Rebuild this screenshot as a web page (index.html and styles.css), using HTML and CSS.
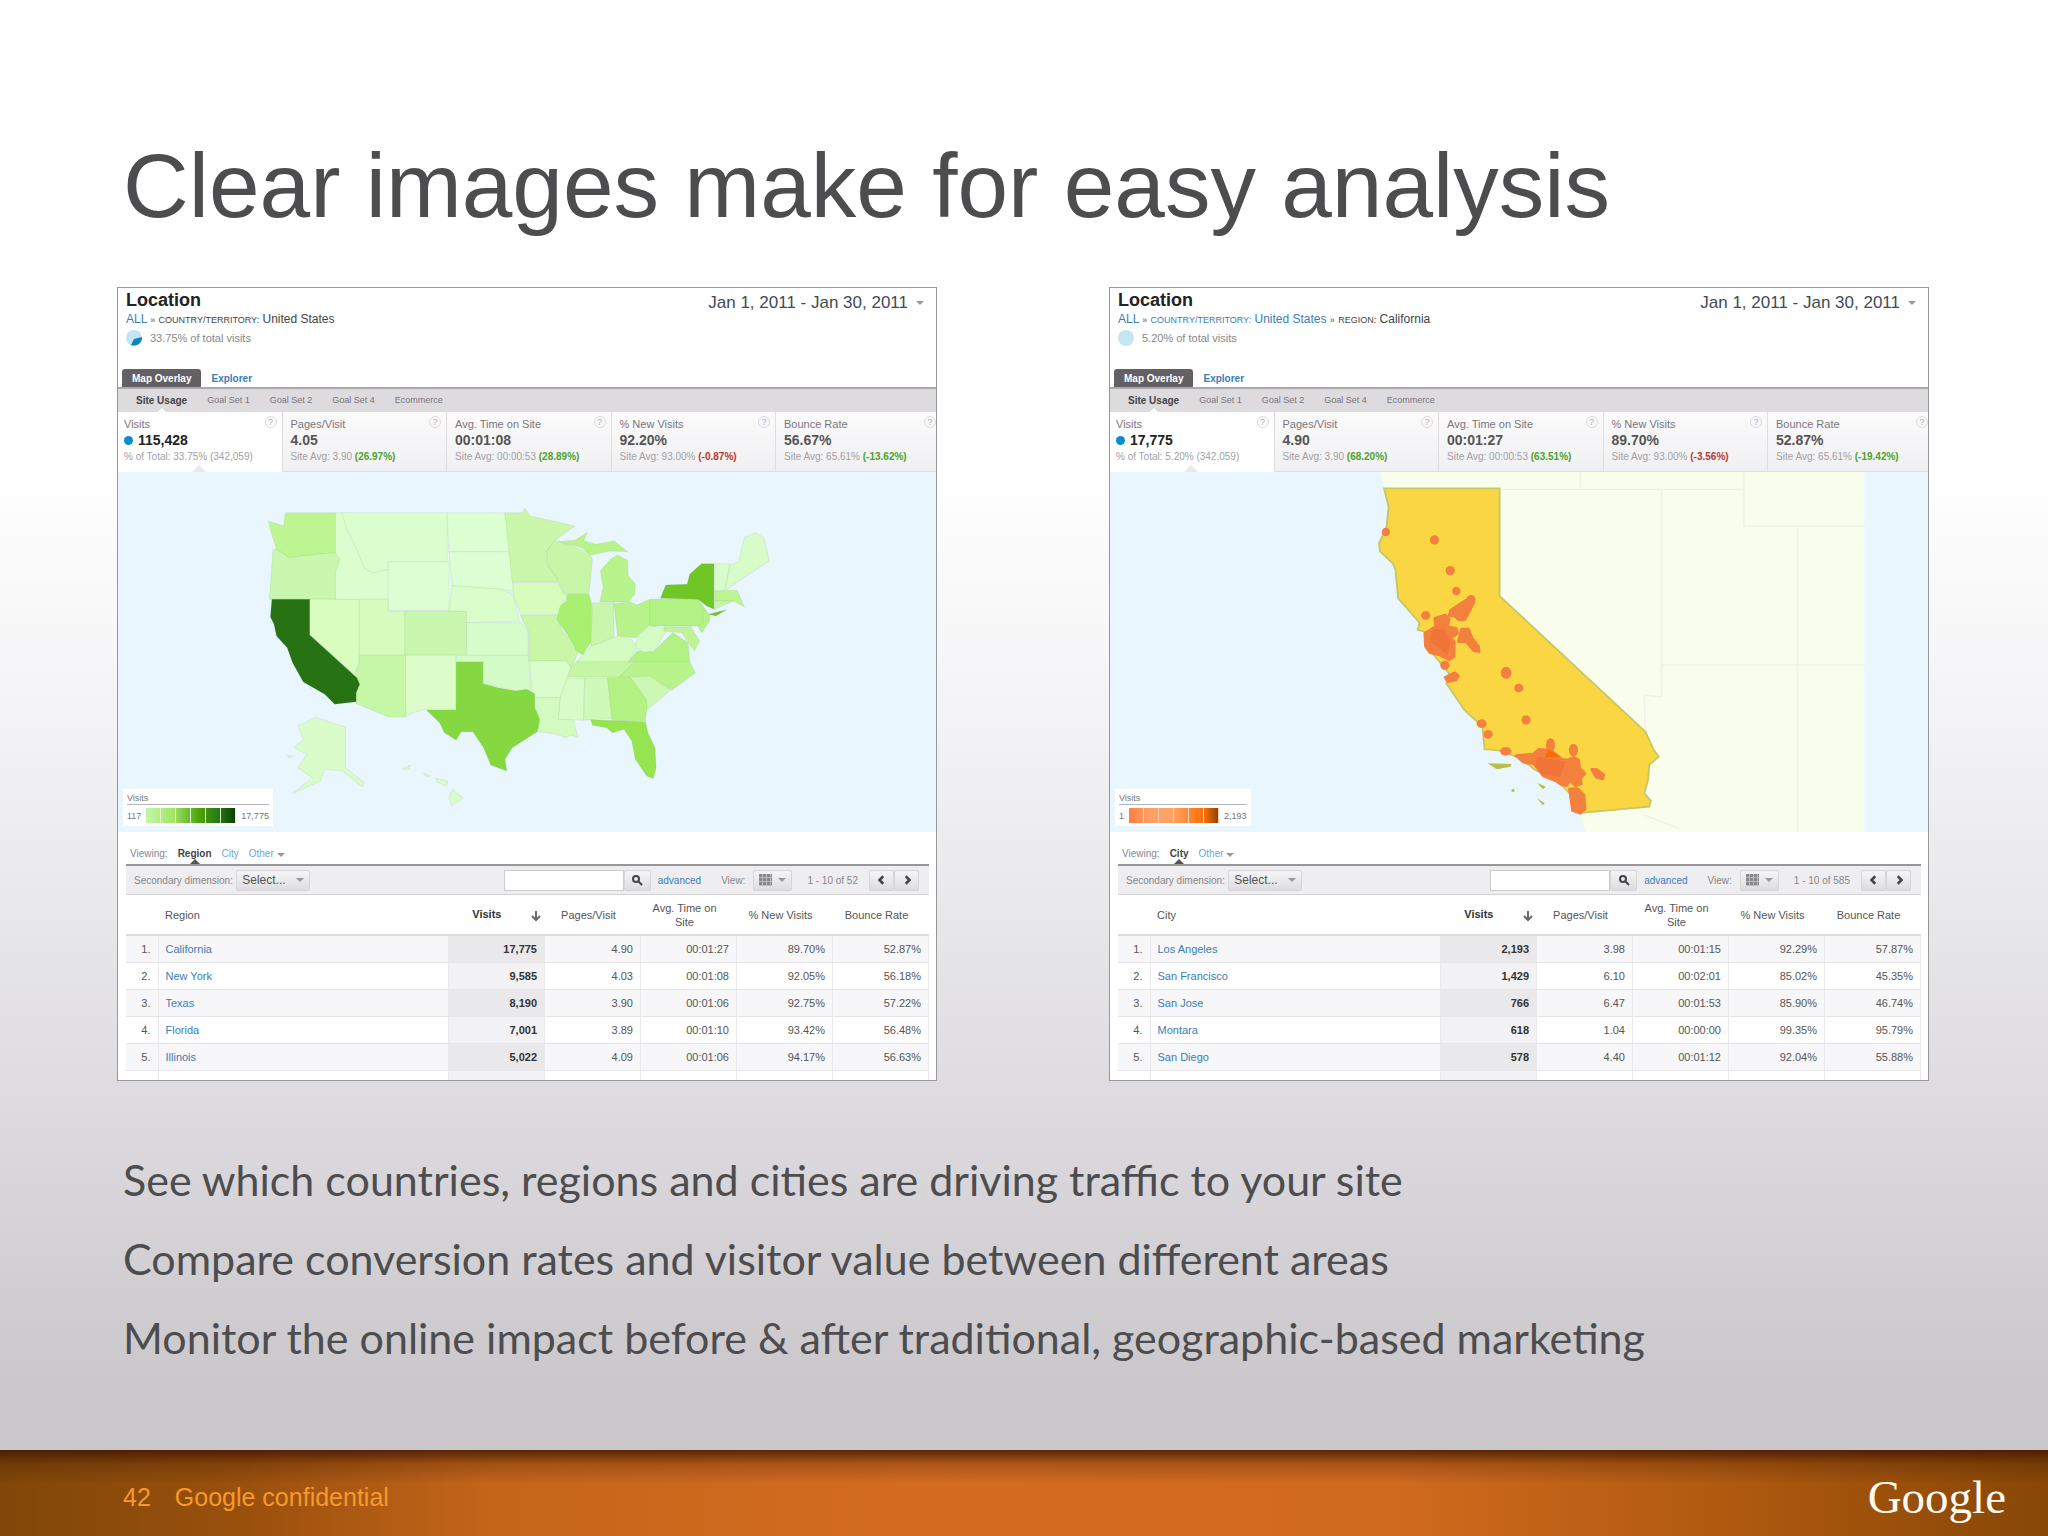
FILE: index.html
```html
<!DOCTYPE html>
<html lang="en">
<head>
  <meta charset="UTF-8">
  <meta name="viewport" content="width=device-width, initial-scale=1.0">
  <title>Clear images make for easy analysis</title>
  <link rel="stylesheet" href="styles.css">
</head>
<body>
  <main class="slide">
    <h1>Clear images make for easy analysis</h1>

    <div class="reports">
      <section class="report">
        <header class="report-header">
          <div>
            <h2>Location</h2>
            <div class="crumbs"><a href="#">ALL</a> <b>»</b> <small>COUNTRY/TERRITORY:</small> United States</div>
            <div class="share">
              <svg class="pie" viewBox="0 0 16 16"><circle cx="8" cy="8" r="8" fill="#c3e6f4"/><path d="M8 9L16 7A8 8 0 0 1 5 15z" fill="#0d84c0"/></svg>
              33.75% of total visits
            </div>
          </div>
          <button class="date-range">Jan 1, 2011 - Jan 30, 2011 <span class="caret"></span></button>
        </header>
        <nav class="tabs">
          <a class="active" href="#">Map Overlay</a>
          <a href="#">Explorer</a>
        </nav>
        <nav class="subtabs">
          <a class="active" href="#">Site Usage</a>
          <a href="#">Goal Set 1</a>
          <a href="#">Goal Set 2</a>
          <a href="#">Goal Set 4</a>
          <a href="#">Ecommerce</a>
        </nav>
        <div class="metrics">
          <div class="metric selected"><span class="label">Visits</span><i class="help">?</i><strong><span class="dot"></span>115,428</strong><span class="note">% of Total: 33.75% (342,059)</span></div>
          <div class="metric"><span class="label">Pages/Visit</span><i class="help">?</i><strong>4.05</strong><span class="note">Site Avg: 3.90 <b class="good">(26.97%)</b></span></div>
          <div class="metric"><span class="label">Avg. Time on Site</span><i class="help">?</i><strong>00:01:08</strong><span class="note">Site Avg: 00:00:53 <b class="good">(28.89%)</b></span></div>
          <div class="metric"><span class="label">% New Visits</span><i class="help">?</i><strong>92.20%</strong><span class="note">Site Avg: 93.00% <b class="bad">(-0.87%)</b></span></div>
          <div class="metric"><span class="label">Bounce Rate</span><i class="help">?</i><strong>56.67%</strong><span class="note">Site Avg: 65.61% <b class="good">(-13.62%)</b></span></div>
        </div>
        <div class="map">
          <svg viewBox="0 0 818 360">
            <g class="states" transform="translate(121 9) scale(.3571 .3333)">
              <path fill="#bdf590" d="M82 120L125 135 130 95H270V215L200 222 140 230 105 205 92 160z"/>
              <path fill="#caf7b0" d="M95 205L105 205 140 230 200 222 270 215 282 235 272 275V355H85L90 280z"/>
              <path fill="#dafdc0" d="M198 355H337V545L322 580 198 462z"/>
              <path fill="#dcfdce" d="M270 95H292L300 140 345 215 350 260 372 275 418 262V355H270V275L282 235 270 215z"/>
              <path fill="#dbfecf" d="M288 95H583V242H418V265L372 275 350 260 330 205 300 140z"/>
              <path fill="#ddffd4" d="M418 242H588V388H418z"/>
              <path fill="#d5fbbd" d="M337 355H418V390H465V523H337z"/>
              <path fill="#c9f7b0" d="M465 390H637V523H465z"/>
              <path fill="#c6f7a6" d="M337 523H467V708H420L328 668V635L338 610 325 580 337 545z"/>
              <path fill="#dcfdca" d="M467 523H608V685H525L485 695 467 708z"/>
              <path fill="#dcffd3" d="M583 95H745L762 212H588z"/>
              <path fill="#dcffd3" d="M588 212H762L768 332 735 325 597 314z"/>
              <path fill="#d9fecb" d="M597 314L735 325 768 340 785 420 637 425V390H588z"/>
              <path fill="#d6fcc9" d="M637 425H792L810 455V523H637z"/>
              <path fill="#d3fbc6" d="M608 523H810L818 630H780L685 608V543H608z"/>
              <path fill="#cbf7ad" d="M745 95H795L800 82 815 105 870 118 940 135 885 178 862 210V250L890 290 893 303H765z"/>
              <path fill="#d7fcbc" d="M768 305H893L918 350 895 400H788L768 340z"/>
              <path fill="#c9f6a7" d="M788 403H890L905 450 940 490 948 520 930 560 915 540H812V455z"/>
              <path fill="#dafdcd" d="M815 540H918L930 560 900 650H822z"/>
              <path fill="#d3fbc1" d="M822 650H900L895 715H935L950 770 930 762 915 770 890 760 835 752 842 715 828 680z"/>
              <path fill="#c8f6a9" d="M885 178L920 190 978 215 990 235 980 338H910L890 290 865 255 862 210z"/>
              <path fill="#a9f070" d="M918 340H980L987 365V480L962 522 945 510 935 485 890 415 900 375 918 360z"/>
              <path fill="#b9f38c" d="M895 182L940 178 975 155 965 180 1000 190 1050 180 1088 212 1040 210 985 222 960 200z"/>
              <path fill="#b9f38c" d="M1040 235L1060 222 1088 238 1090 285 1110 310 1108 340 1090 363H1010L1020 320 1012 270z"/>
              <path fill="#c7f6ac" d="M990 365H1050V470L985 497z"/>
              <path fill="#b7f28a" d="M1050 368L1095 363 1115 372 1150 355V430L1110 470 1060 465z"/>
              <path fill="#d4fbc0" d="M962 522L985 497 1060 465 1100 475 1115 500 1090 540 945 542z"/>
              <path fill="#c6f6a5" d="M930 560L945 542H1110L1065 588H920z"/>
              <path fill="#d8fcc7" d="M918 592H968L965 718 895 715 900 650z"/>
              <path fill="#cef9b7" d="M968 592H1032L1045 712 965 718z"/>
              <path fill="#b4f284" d="M1032 590L1095 588 1145 655 1138 720 1045 718z"/>
              <path fill="#ccf8b5" d="M1095 588L1150 582 1208 628 1145 685 1140 655z"/>
              <path fill="#b9f38c" d="M1110 542H1262L1278 575 1212 628 1150 585 1065 588z"/>
              <path fill="#b2f183" d="M1090 542L1115 510 1160 512 1215 455 1258 485 1262 542z"/>
              <path fill="#d6fcc5" d="M1110 500L1115 470 1150 432 1200 445 1165 505 1135 515z"/>
              <path fill="#b2f183" d="M1150 355H1285L1310 392 1300 435H1150z"/>
              <path fill="#b5f288" d="M1298 385L1318 400V420L1295 455 1285 435 1300 425z"/>
              <path fill="#c0f498" d="M1190 437H1265L1290 480 1275 510 1240 455 1190 450z"/>
              <path fill="#6fc624" d="M1180 352L1195 312 1255 310 1262 280 1295 248H1330V385L1310 375 1285 355z"/>
              <path fill="#6fc624" d="M1315 400L1365 386 1335 405z"/>
              <path fill="#d9fccb" d="M1332 248H1375L1360 330H1332z"/>
              <path fill="#d8fcc7" d="M1375 255L1400 240 1415 170 1445 155 1470 170 1485 240 1420 285 1360 330z"/>
              <path fill="#bdf494" d="M1332 330L1395 328 1415 378 1385 360H1332z"/>
              <path fill="#c7f6aa" d="M1332 360H1385L1332 385z"/>
              <path fill="#277314" d="M92 355H198V462L330 590 338 610 328 635V662L268 670 240 640 180 603 150 545 135 500 105 465 98 430 88 408z"/>
              <path fill="#86d840" d="M608 543H683V608L725 620 775 630 805 625 828 638V680L842 715 835 752 765 800 745 835 750 870 705 852 685 800 655 752H622L608 777 575 755 562 725 525 687H608z"/>
              <path fill="#96e450" d="M985 716L1138 722 1145 755 1165 800 1168 860 1160 893 1142 885 1110 835 1100 780 1078 745 1045 755 1030 740 990 733z"/>
              <path fill="#dafcc8" d="M165 735L215 710 298 738V860L350 905 345 918 290 870 240 865 228 900 150 938 205 890 165 860 190 820 155 800 180 775z"/>
              <path fill="#dafcc8" d="M455 865L480 852 475 864zM515 875L535 885 525 888zM550 892L585 900 580 915 555 903zM597 925L628 952 595 975 588 950zM135 822L150 826 140 830zM195 618L205 624zM232 645L240 658z"/>
            </g>
          </svg>
          <div class="legend">
            <p>Visits</p>
            <div class="scale"><span>117</span><i class="ramp green"></i><span>17,775</span></div>
          </div>
        </div>
        <div class="viewing">
          <span>Viewing:</span> <a class="active" href="#">Region</a> <a href="#">City</a> <a href="#">Other <span class="caret"></span></a>
        </div>
        <div class="toolbar">
          <span class="dimension">Secondary dimension:</span>
          <button class="select">Select... <span class="caret"></span></button>
          <div class="search">
            <input type="text" aria-label="Search regions">
            <button aria-label="Search"><svg viewBox="0 0 12 12"><circle cx="5" cy="5" r="3" /><path d="M7 7l4 4"/></svg></button>
          </div>
          <a href="#">advanced</a>
          <span class="view">View:</span>
          <button class="grid-button" aria-label="Table view"><span class="grid-icon"></span><span class="caret"></span></button>
          <span class="range">1 - 10 of 52</span>
          <div class="pager"><button aria-label="Previous"><svg viewBox="0 0 8 8"><path d="M5 1L2 4l3 3"/></svg></button><button aria-label="Next"><svg viewBox="0 0 8 8"><path d="M3 1l3 3-3 3"/></svg></button></div>
        </div>
        <table>
          <thead>
            <tr><th class="num"></th><th class="name">Region</th><th class="visits">Visits <svg viewBox="0 0 10 12"><path d="M5 1v9M1 6l4 4 4-4"/></svg></th><th>Pages/Visit</th><th>Avg. Time on Site</th><th>% New Visits</th><th>Bounce Rate</th></tr>
          </thead>
          <tbody>
            <tr><td>1.</td><td><a href="#">California</a></td><td>17,775</td><td>4.90</td><td>00:01:27</td><td>89.70%</td><td>52.87%</td></tr>
            <tr><td>2.</td><td><a href="#">New York</a></td><td>9,585</td><td>4.03</td><td>00:01:08</td><td>92.05%</td><td>56.18%</td></tr>
            <tr><td>3.</td><td><a href="#">Texas</a></td><td>8,190</td><td>3.90</td><td>00:01:06</td><td>92.75%</td><td>57.22%</td></tr>
            <tr><td>4.</td><td><a href="#">Florida</a></td><td>7,001</td><td>3.89</td><td>00:01:10</td><td>93.42%</td><td>56.48%</td></tr>
            <tr><td>5.</td><td><a href="#">Illinois</a></td><td>5,022</td><td>4.09</td><td>00:01:06</td><td>94.17%</td><td>56.63%</td></tr>
            <tr><td>6.</td><td><a href="#">Pennsylvania</a></td><td>4,571</td><td>3.88</td><td>00:00:54</td><td>94.20%</td><td>57.14%</td></tr>
          </tbody>
        </table>
      </section>

      <section class="report">
        <header class="report-header">
          <div>
            <h2>Location</h2>
            <div class="crumbs"><a href="#">ALL</a> <b>»</b> <a href="#"><small>COUNTRY/TERRITORY:</small> United States</a> <b>»</b> <small>REGION:</small> California</div>
            <div class="share">
              <svg class="pie" viewBox="0 0 16 16"><circle cx="8" cy="8" r="8" fill="#c3e6f0"/></svg>
              5.20% of total visits
            </div>
          </div>
          <button class="date-range">Jan 1, 2011 - Jan 30, 2011 <span class="caret"></span></button>
        </header>
        <nav class="tabs">
          <a class="active" href="#">Map Overlay</a>
          <a href="#">Explorer</a>
        </nav>
        <nav class="subtabs">
          <a class="active" href="#">Site Usage</a>
          <a href="#">Goal Set 1</a>
          <a href="#">Goal Set 2</a>
          <a href="#">Goal Set 4</a>
          <a href="#">Ecommerce</a>
        </nav>
        <div class="metrics">
          <div class="metric selected"><span class="label">Visits</span><i class="help">?</i><strong><span class="dot"></span>17,775</strong><span class="note">% of Total: 5.20% (342,059)</span></div>
          <div class="metric"><span class="label">Pages/Visit</span><i class="help">?</i><strong>4.90</strong><span class="note">Site Avg: 3.90 <b class="good">(68.20%)</b></span></div>
          <div class="metric"><span class="label">Avg. Time on Site</span><i class="help">?</i><strong>00:01:27</strong><span class="note">Site Avg: 00:00:53 <b class="good">(63.51%)</b></span></div>
          <div class="metric"><span class="label">% New Visits</span><i class="help">?</i><strong>89.70%</strong><span class="note">Site Avg: 93.00% <b class="bad">(-3.56%)</b></span></div>
          <div class="metric"><span class="label">Bounce Rate</span><i class="help">?</i><strong>52.87%</strong><span class="note">Site Avg: 65.61% <b class="good">(-19.42%)</b></span></div>
        </div>
        <div class="map">
          <svg viewBox="0 0 818 360">
            <g transform="translate(230 -12) scale(.3827 .3333)">
              <path fill="#f9fdec" d="M105 30H1370V1130H645L628 1060 417 408 115 85z"/>
              <path fill="none" stroke="#eef2e2" stroke-width="4" d="M1055 30V198H1370M417 88H1055M628 38V85M840 88V710L795 705 798 815M840 615H1370M1195 198V1130M795 1065L890 1108"/>
              <path fill="#fad742" stroke="#c6c766" stroke-width="5" d="M115 85H417V408L798 815 820 870 833 890 808 915 805 960 795 1000 812 1022 808 1040 638 1058 600 1000 560 955 510 930 470 895 420 872 378 868 372 800 325 750 278 670 285 640 245 585 222 515 203 510 208 488 152 415 145 330 138 310 105 275 102 250 122 200 127 140z"/>
              <path fill="#b9bf45" d="M385 910L448 912 445 920 410 928zM515 968L538 980 530 988zM515 1015L535 1030 530 1036zM448 988h8v7h-8z"/>
              <g fill="#f4803f">
                <ellipse cx="120" cy="216" rx="11" ry="13"/><ellipse cx="247" cy="240" rx="12" ry="14"/><ellipse cx="288" cy="332" rx="12" ry="14"/><ellipse cx="304" cy="393" rx="11" ry="13"/>
                <ellipse cx="224" cy="466" rx="12" ry="13"/><ellipse cx="342" cy="418" rx="12" ry="13"/><ellipse cx="467" cy="684" rx="12" ry="13"/><ellipse cx="486" cy="780" rx="12" ry="14"/>
                <ellipse cx="434" cy="638" rx="14" ry="18"/><ellipse cx="370" cy="791" rx="13" ry="13"/><ellipse cx="387" cy="823" rx="12" ry="13"/><ellipse cx="433" cy="874" rx="15" ry="13"/>
                <ellipse cx="550" cy="855" rx="12" ry="20"/><ellipse cx="610" cy="870" rx="12" ry="19"/><ellipse cx="274" cy="616" rx="12" ry="14"/>
                <path stroke="#f4803f" stroke-width="8" stroke-linejoin="round" d="M330 420L350 425 335 460 325 480H310L300 468H285L290 450zM248 475L275 465 285 478 280 500 303 505 307 520 290 535 298 545V590L285 600 260 585 235 578 224 560 222 520 250 500zM318 507H335L345 535 362 560 363 575 350 572 330 545H310zM275 652L300 638 309 648 303 660 282 665zM460 887L505 882 520 868 550 870 580 898 595 900 610 892 623 900 626 925 640 940 628 955 630 972 615 977 600 960 592 977 577 973 565 963 532 948 508 912 480 907zM658 928L670 928 689 945 686 957 670 952zM600 987L620 985 637 1005 640 1048 628 1060 608 1052z"/>
              </g>
              <path fill="#ef7136" fill-opacity=".8" d="M240 510L270 505 290 545 280 585 255 560 235 545zM515 890L590 905 575 950 530 945 510 920z"/>
              <path fill="#fb6b00" d="M545 868L575 890 535 892z"/>
            </g>
          </svg>
          <div class="legend">
            <p>Visits</p>
            <div class="scale"><span>1</span><i class="ramp orange"></i><span>2,193</span></div>
          </div>
        </div>
        <div class="viewing">
          <span>Viewing:</span> <a class="active" href="#">City</a> <a href="#">Other <span class="caret"></span></a>
        </div>
        <div class="toolbar">
          <span class="dimension">Secondary dimension:</span>
          <button class="select">Select... <span class="caret"></span></button>
          <div class="search">
            <input type="text" aria-label="Search cities">
            <button aria-label="Search"><svg viewBox="0 0 12 12"><circle cx="5" cy="5" r="3" /><path d="M7 7l4 4"/></svg></button>
          </div>
          <a href="#">advanced</a>
          <span class="view">View:</span>
          <button class="grid-button" aria-label="Table view"><span class="grid-icon"></span><span class="caret"></span></button>
          <span class="range">1 - 10 of 585</span>
          <div class="pager"><button aria-label="Previous"><svg viewBox="0 0 8 8"><path d="M5 1L2 4l3 3"/></svg></button><button aria-label="Next"><svg viewBox="0 0 8 8"><path d="M3 1l3 3-3 3"/></svg></button></div>
        </div>
        <table>
          <thead>
            <tr><th class="num"></th><th class="name">City</th><th class="visits">Visits <svg viewBox="0 0 10 12"><path d="M5 1v9M1 6l4 4 4-4"/></svg></th><th>Pages/Visit</th><th>Avg. Time on Site</th><th>% New Visits</th><th>Bounce Rate</th></tr>
          </thead>
          <tbody>
            <tr><td>1.</td><td><a href="#">Los Angeles</a></td><td>2,193</td><td>3.98</td><td>00:01:15</td><td>92.29%</td><td>57.87%</td></tr>
            <tr><td>2.</td><td><a href="#">San Francisco</a></td><td>1,429</td><td>6.10</td><td>00:02:01</td><td>85.02%</td><td>45.35%</td></tr>
            <tr><td>3.</td><td><a href="#">San Jose</a></td><td>766</td><td>6.47</td><td>00:01:53</td><td>85.90%</td><td>46.74%</td></tr>
            <tr><td>4.</td><td><a href="#">Montara</a></td><td>618</td><td>1.04</td><td>00:00:00</td><td>99.35%</td><td>95.79%</td></tr>
            <tr><td>5.</td><td><a href="#">San Diego</a></td><td>578</td><td>4.40</td><td>00:01:12</td><td>92.04%</td><td>55.88%</td></tr>
            <tr><td>6.</td><td><a href="#">Sacramento</a></td><td>454</td><td>4.57</td><td>00:01:07</td><td>91.70%</td><td>60.87%</td></tr>
          </tbody>
        </table>
      </section>
    </div>

    <div class="points">
      <p>See which countries, regions and cities are driving traffic to your site</p>
      <p>Compare conversion rates and visitor value between different areas</p>
      <p>Monitor the online impact before &amp; after traditional, geographic-based marketing</p>
    </div>
  </main>

  <footer class="footer">
    <span class="page-number">42</span>
    <span>Google confidential</span>
    <span class="logo">Google</span>
  </footer>
</body>
</html>
```
FILE: styles.css
```css
* {
  box-sizing: border-box;
}
body {
  margin: 0;
  min-height: 100vh;
  display: flex;
  flex-direction: column;
  font-family: "Liberation Sans", Arial, sans-serif;
  color: #4d4d4f;
  background: linear-gradient(#fff 0%, #fff 30%, #f4f4f6 46%, #dedce0 71%, #cac8cb 90%, #cac8cb 100%);
}
a {
  color: #3a7cb4;
  text-decoration: none;
}
button {
  font-family: inherit;
  padding: 0;
  cursor: pointer;
}
.slide {
  padding: 133px 119px 0 117px;
}
h1 {
  margin: 0 0 49px 6px;
  font-size: 91px;
  line-height: 105px;
  font-weight: normal;
}
.reports {
  display: grid;
  grid-template-columns: 1fr 1fr;
  gap: 172px;
}
.report {
  min-width: 0;
  max-height: 794px;
  overflow: hidden;
  border: 1px solid #98989c;
  background: #fff;
  font-size: 11px;
}
.caret {
  display: inline-block;
  border: 4px solid transparent;
  border-top-color: #999;
  border-bottom: 0;
}

/* header */
.report-header {
  display: flex;
  justify-content: space-between;
  align-items: flex-start;
  height: 81px;
  padding: 2px 12px 0 8px;
}
h2 {
  margin: 0;
  font-size: 18px;
  line-height: 20px;
  color: #222;
}
.crumbs {
  font-size: 12px;
  line-height: 18px;
  color: #444;
}
.crumbs small {
  font-size: 9px;
}
.crumbs b {
  font-size: 9px;
  color: #888;
}
.share {
  display: flex;
  align-items: center;
  gap: 8px;
  line-height: 18px;
  color: #888;
}
.pie {
  width: 16px;
  height: 16px;
}
.date-range {
  display: flex;
  align-items: center;
  gap: 8px;
  border: 0;
  background: none;
  font-size: 17px;
  line-height: 26px;
  color: #3f4a58;
}

/* tabs */
.tabs {
  display: flex;
  height: 20px;
  padding-left: 4px;
  border-bottom: 2px solid #aaa8ab;
  font-size: 10px;
  font-weight: bold;
  line-height: 19px;
}
.tabs a {
  padding: 0 10px;
}
.tabs .active {
  background: #626064;
  color: #fff;
  border-radius: 3px 3px 0 0;
}
.subtabs {
  display: flex;
  gap: 20px;
  height: 23px;
  padding-left: 18px;
  background: #dddbde;
  font-size: 9px;
  line-height: 23px;
}
.subtabs a {
  color: #77757a;
}
.subtabs .active {
  position: relative;
  font-size: 10px;
  font-weight: bold;
  color: #444;
}
.subtabs .active::after {
  content: "";
  position: absolute;
  left: 50%;
  bottom: 0;
  margin-left: -4px;
  border: 4px solid transparent;
  border-top: 0;
  border-bottom-color: #fff;
}

/* metrics */
.metrics {
  display: grid;
  grid-template-columns: repeat(4, 1fr) 160px;
  height: 60px;
}
.metric {
  display: grid;
  grid-template-columns: 1fr auto;
  align-content: start;
  padding: 4px 5px 0 8px;
  border-right: 1px solid #dfdde0;
  border-bottom: 1px solid #dfdde0;
  background: linear-gradient(#fcfbfc, #f0eff1);
  line-height: 16px;
  color: #77757a;
}
.metric.selected {
  position: relative;
  background: #fff;
  border-bottom-color: #fff;
  padding-left: 6px;
}
.metric.selected::after {
  content: "";
  position: absolute;
  left: 50%;
  bottom: -1px;
  margin-left: -8px;
  border: 7px solid transparent;
  border-top: 0;
  border-bottom-color: #e6eaee;
}
.metric:last-child {
  padding-right: 0;
  border-right: 0;
}
.metric strong,
.metric .note {
  grid-column: 1 / 3;
  white-space: nowrap;
}
.metric strong {
  font-size: 14px;
  color: #555;
}
.metric.selected strong {
  color: #222;
}
.metric .note {
  font-size: 10px;
  line-height: 18px;
  color: #a19fa3;
}
.metric .good {
  color: #4ba32c;
}
.metric .bad {
  color: #b23a30;
}
.help {
  width: 12px;
  height: 12px;
  border: 1px solid #dcdadd;
  border-radius: 50%;
  font-size: 9px;
  font-style: normal;
  line-height: 10px;
  text-align: center;
  color: #aaa;
}
.dot {
  display: inline-block;
  width: 9px;
  height: 9px;
  margin-right: 5px;
  border-radius: 50%;
  background: #0d8bc9;
}

/* map */
.map {
  position: relative;
  background: #eaf6fe;
}
.map svg {
  display: block;
  width: 100%;
}
.states path {
  stroke: #6c9c5a;
  stroke-opacity: .12;
  stroke-width: 3;
}
.legend {
  position: absolute;
  left: 5px;
  bottom: 6px;
  padding: 3px 4px;
  background: #fff;
  font-size: 9px;
  color: #777;
}
.legend p {
  margin: 0 0 3px;
  border-bottom: 1px solid #b5b5b5;
  line-height: 12px;
}
.scale {
  display: flex;
  align-items: center;
  gap: 5px;
}
.ramp {
  width: 90px;
  height: 15px;
}
.ramp.green {
  background: repeating-linear-gradient(90deg, transparent 0 14px, #dff2cf 14px 15px), linear-gradient(90deg, #c5f6a6, #a2e568 30%, #4fa50b 58%, #277b14 80%, #0c3d06);
}
.ramp.orange {
  background: repeating-linear-gradient(90deg, transparent 0 14px, #ffd3ae 14px 15px), linear-gradient(90deg, #ff7f43, #ffa166 25%, #ffa263 50%, #ff7a1b 75%, #f26d08 85%, #8a3d00);
}

/* table controls */
.viewing {
  display: flex;
  gap: 10px;
  margin: 0 7px 0 8px;
  padding: 13px 4px 0;
  height: 34px;
  border-bottom: 2px solid #98989b;
  font-size: 10px;
  line-height: 18px;
  color: #88868a;
}
.viewing a {
  color: #6aa9cf;
}
.viewing .active {
  position: relative;
  font-weight: bold;
  color: #444;
}
.viewing .active::after {
  content: "";
  position: absolute;
  left: 50%;
  bottom: 0;
  margin-left: -5px;
  border: 5px solid transparent;
  border-top: 0;
  border-bottom-color: #555;
}
.toolbar {
  display: flex;
  align-items: center;
  height: 29px;
  margin: 0 7px 0 8px;
  padding: 0 10px 0 8px;
  border-bottom: 1px solid #d5d3d6;
  background: #eeedef;
  font-size: 10px;
  color: #88868a;
  white-space: nowrap;
}
.toolbar button {
  display: flex;
  align-items: center;
  justify-content: center;
  height: 21px;
  border: 1px solid #d6d5d8;
  border-radius: 2px;
  background: linear-gradient(#f6f5f6, #dddcde);
}
.toolbar svg {
  width: 12px;
  height: 12px;
  fill: none;
  stroke: #444;
  stroke-width: 2;
}
.toolbar .select {
  width: 74px;
  gap: 10px;
  margin-left: 3px;
  font-size: 12px;
  color: #555;
}
.search {
  display: flex;
  margin: 0 7px 0 auto;
}
.search input {
  width: 120px;
  height: 21px;
  border: 1px solid #ccc;
  background: #fff;
}
.search button {
  width: 27px;
}
.view {
  margin: 0 8px 0 20px;
}
.toolbar .grid-button {
  width: 39px;
  gap: 6px;
}
.grid-icon {
  width: 13px;
  height: 12px;
  background: repeating-linear-gradient(90deg, transparent 0 3px, #bbb 3px 4px), repeating-linear-gradient(#888 0 3px, #bbb 3px 4px);
}
.range {
  margin: 0 11px 0 15px;
}
.pager {
  display: flex;
}
.pager button {
  width: 25px;
}
.toolbar .pager svg {
  width: 10px;
  height: 10px;
}

/* table */
table {
  width: calc(100% - 15px);
  margin: 0 7px 0 8px;
  table-layout: fixed;
  border-collapse: collapse;
  color: #555;
}
th {
  width: 96px;
  height: 40px;
  padding: 0 14px;
  border-bottom: 2px solid #dddcde;
  font-weight: normal;
  line-height: 14px;
  color: #555;
}
th:nth-child(n+4) {
  padding: 0 16px 0 8px;
}
th.num {
  width: 32px;
}
th.name {
  width: auto;
  padding: 0 7px;
  text-align: left;
}
th.visits {
  padding: 0 4px 0 0;
  text-align: right;
  font-weight: bold;
  color: #333;
}
th.visits svg {
  width: 10px;
  height: 12px;
  margin-left: 26px;
  vertical-align: middle;
  fill: none;
  stroke: #666;
  stroke-width: 2;
}
td {
  height: 27px;
  padding: 0 7px;
  border-bottom: 1px solid #e6e5e8;
  border-right: 1px solid #e9e8ea;
  text-align: right;
}
td:nth-child(2) {
  text-align: left;
}
td:nth-child(3) {
  background: #f2f1f3;
  font-weight: bold;
  color: #333;
}
tbody tr:nth-child(odd) {
  background: #f7f7f9;
}
tbody tr:nth-child(odd) td:nth-child(3) {
  background: #e9e8ea;
}

.points {
  margin: 59px 6px 0;
  font-family: Lato, sans-serif;
  font-size: 43px;
  line-height: 79px;
}
.points p {
  margin: 0;
}

.footer {
  display: flex;
  align-items: center;
  gap: 24px;
  height: 86px;
  margin-top: auto;
  padding: 8px 42px 0 123px;
  background: linear-gradient(rgba(60, 20, 0, .8), rgba(60, 20, 0, .25) 14px, transparent 34px), linear-gradient(90deg, #804708, #9a500d 12%, #c4651a 24%, #d46c20 45%, #d06a1e 68%, #ae590f 85%, #874706);
  font-size: 25px;
  color: #f59a2b;
}
.logo {
  margin-left: auto;
  font-family: "Liberation Serif", serif;
  font-size: 47px;
  line-height: 50px;
  color: #fffaf0;
}
```
